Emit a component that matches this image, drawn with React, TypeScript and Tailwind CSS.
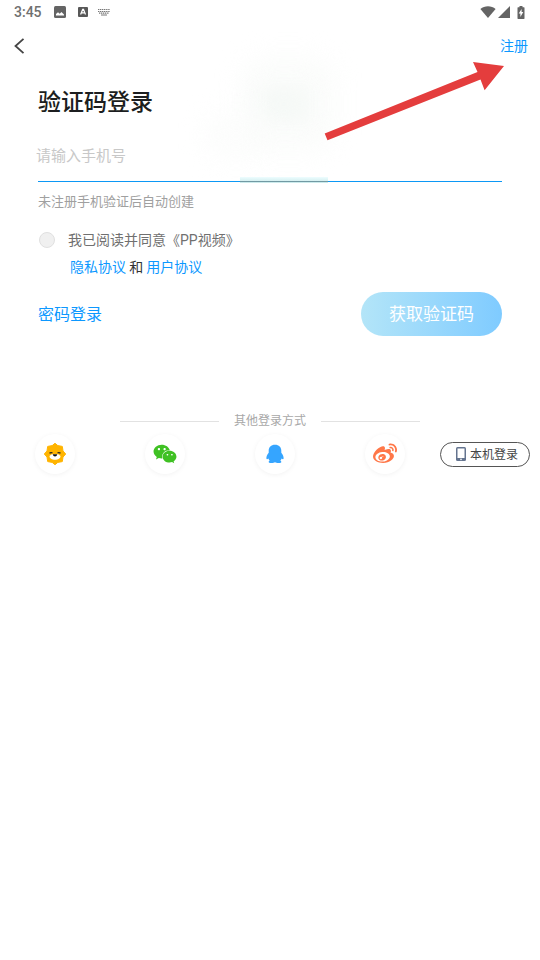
import React from "react";
import { FaWeibo, FaWeixin } from "react-icons/fa";

const fontStack = "font-['Noto_Sans_CJK_SC','Noto_Sans',sans-serif]";

function StatusBar() {
  return (
    <div className="flex h-6 items-center justify-between pl-3.5 pr-3.5 text-[#646464]">
      <div className="flex items-center">
        <span className="w-10 font-['Roboto',sans-serif] text-sm font-medium leading-6 text-[#707070]">3:45</span>
        <svg className="h-3 w-3" viewBox="0 0 12 12" aria-hidden="true">
          <rect width="12" height="12" rx="1.5" fill="#646464" />
          <path d="M2 9.5V8l2-1.7 1.7 1.5L7.5 6 10 8.5v1z" fill="#fff" />
        </svg>
        <svg className="ml-3 h-2.5 w-2.5" viewBox="0 0 10 10" aria-hidden="true">
          <rect width="10" height="10" rx="1" fill="#585858" />
          <path d="M2.6 7.5 4.7 2.4h.8l2 5.1M3.5 5.8h3" fill="none" stroke="#fff" strokeWidth="1.2" />
        </svg>
        <svg className="ml-2.5 h-2 w-3" viewBox="0 0 12 8" aria-hidden="true">
          <path d="M0 1.5h12M0 3.5h12M1 5.2h10" stroke="#777" strokeWidth="1.2" strokeDasharray="1.3 .6" />
          <path d="M3 7h6" stroke="#777" />
        </svg>
      </div>
      <div className="flex items-center">
        <svg className="h-3 w-4" viewBox="0 0 16 12" aria-hidden="true">
          <path d="M8 12 .4 3C4.500-.8 11.500-.8 15.600 3z" fill="currentColor" />
        </svg>
        <svg className="ml-0.5 h-3 w-3" viewBox="0 0 12 12" aria-hidden="true">
          <path d="M12 0v12H0z" fill="currentColor" />
        </svg>
        <svg className="ml-1.5 h-[13px] w-2.5" viewBox="0 0 10 13" aria-hidden="true">
          <path d="M3.500 0h3v1.300H8q.5 0 .5.700v10.300q0 .7-.5.700H2q-.5 0-.5-.700V2q0-.7.5-.7h1.500z" fill="currentColor" />
          <path d="M5.600 3v3H7.300L4.400 11V7.500H2.700z" fill="#fff" />
        </svg>
      </div>
    </div>
  );
}

function LionIcon() {
  return (
    <svg className="h-6 w-6" viewBox="0 0 24 24" aria-hidden="true">
      <path
        d="M12 1.300 14.800 3.600 19.300 4.400 20 8.900 22.700 12 20 15.100 19.300 19.600 14.800 20.400 12 22.700 9.200 20.400 4.700 19.600 4 15.100 1.300 12 4 8.900 4.700 4.400 9.200 3.600z"
        fill="#ffb400"
        stroke="#ffb400"
        strokeLinejoin="round"
      />
      <path d="M6.500 14q1.500-2 4-2h3q2.500 0 4 2c0 2.500-2.500 3.700-5.500 3.700s-5.500-1.200-5.500-3.700z" fill="#fff" />
      <path d="M6.500 11.300q1.500-1.300 3-.3M14.500 11q1.500-1 3 .3" stroke="#222" strokeWidth="1.300" fill="none" />
      <path d="M9.700 12.300h4.600l-.8 1.600-1.500.7-1.500-.7z" fill="#111" />
    </svg>
  );
}

function PenguinIcon() {
  return (
    <svg className="h-5 w-5" viewBox="0 0 20 20" aria-hidden="true">
      <path
        d="M10 .8c4 0 6.300 2.500 6.300 6.200v1.700c1.700 2 2.500 4.100 2.300 5.700-.1 1-.9 1.100-2 .1-.3.900-.7 1.600-1.300 2.200.9.400 1.200.9 1 1.500-.5 1.100-4.900 1.100-6.300.100-1.400 1-5.800 1-6.300-.100-.2-.6.1-1.100 1-1.500-.6-.6-1-1.300-1.300-2.200-1.100 1-1.900.9-2-.100-.2-1.600.6-3.700 2.300-5.700V7C3.700 3.300 6 .8 10 .8z"
        fill="#35a5ff"
      />
    </svg>
  );
}

function Provider({ label, children }: { label: string; children: React.ReactNode }) {
  return (
    <button
      type="button"
      aria-label={label}
      className="flex h-10 w-10 items-center justify-center rounded-full bg-white shadow-[0_1px_5px_rgba(0,0,0,0.05)]"
    >
      {children}
    </button>
  );
}

function Arrow() {
  return (
    <svg className="pointer-events-none absolute right-9 top-[62px] h-[79px] w-[180px]" viewBox="324 62 180 79" aria-hidden="true">
      <path d="M324.700 133.500 477.500 72 473 62l31 4-19.400 24.300L480.500 79.500 327.500 140.200z" fill="#e43d3d" />
    </svg>
  );
}

function Haze() {
  return (
    <div className="pointer-events-none absolute left-1/2 top-12 -ml-[70px] h-32 w-40" aria-hidden="true">
      <div className="absolute left-10 top-2 h-24 w-24 rounded-3xl bg-[#f9fbf9] opacity-60 blur-md" />
      <div className="absolute left-14 top-10 h-8 w-14 rounded-2xl bg-[#f0f6f2] opacity-60 blur-md" />
      <div className="absolute left-1 top-16 h-12 w-16 rounded-2xl bg-[#fbfcfb] opacity-60 blur-md" />
    </div>
  );
}

export default function App() {
  return (
    <div className={`relative min-h-screen bg-white ${fontStack}`}>
      <StatusBar />
      <Haze />
      <header className="flex h-11 items-center justify-between px-3">
        <button type="button" aria-label="返回">
          <svg className="h-4 w-4" viewBox="0 0 16 16" fill="none" stroke="#444" strokeWidth="1.800" aria-hidden="true">
            <path d="M11.500.8 3.500 8l8 7.200" />
          </svg>
        </button>
        <a href="#register" className="pb-0.5 text-sm leading-5 text-[#0c98ff]">注册</a>
      </header>

      <main>
        <form className="px-[38px] pt-4">
          <h1 className="text-[23px] font-medium leading-8 text-[#1c1e20]">验证码登录</h1>
          <div className="relative mt-6 border-b border-[#0c98f5] pb-3">
            <input
              type="tel"
              aria-label="手机号"
              placeholder="请输入手机号"
              className="-ml-0.5 block h-[29px] w-full bg-transparent text-[15px] text-[#333] outline-none placeholder:text-[#c8c8c8]"
            />
            <div className="absolute -bottom-0.5 left-1/2 -ml-[30px] h-1.5 w-[88px] bg-linear-to-b from-[#eefdff] to-[#c9e9ea]" aria-hidden="true">
              <div className="mt-1 h-px bg-[#7199a3]" />
            </div>
          </div>
          <p className="mt-[9px] text-[13px] leading-5 text-[#a0a0a0]">未注册手机验证后自动创建</p>

          <div className="mt-[19px] flex items-start">
            <input
              id="agree"
              type="checkbox"
              className="mt-0.5 ml-px h-4 w-4 appearance-none rounded-full border border-[#e0e0e0] bg-[#f0f0f0] checked:bg-[#0c98ff]"
            />
            <div className="ml-[13px] text-sm leading-5">
              <label htmlFor="agree" className="block font-['Roboto','Noto_Sans_CJK_SC',sans-serif] text-[#707070]">我已阅读并同意《PP视频》</label>
              <p className="mt-1.5 pl-0.5 text-[#333]">
                <a href="#privacy" className="text-[#0c98ff]">隐私协议</a> 和 <a href="#terms" className="text-[#0c98ff]">用户协议</a>
              </p>
            </div>
          </div>

          <div className="mt-4 flex items-center justify-between">
            <a href="#password" className="pb-0.5 text-base leading-6 text-[#0c98ff]">密码登录</a>
            <button
              type="button"
              className="h-11 rounded-full bg-linear-to-r from-[#b3e5f8] to-[#7fcbff] px-7 pb-0.5 text-[17px] leading-6 text-white"
            >
              获取验证码
            </button>
          </div>
        </form>

        <section className="mt-[74px]">
          <div className="flex items-center px-[120px]">
            <div className="h-px flex-1 bg-[#e2e2e2]" />
            <h2 className="px-[15px] pb-0.5 text-xs leading-5 text-[#a8a8a8]">其他登录方式</h2>
            <div className="h-px flex-1 bg-[#e2e2e2]" />
          </div>
          <div className="mt-0.5 flex items-center gap-[35px] pl-[35px] pr-2.5">
            <div className="flex flex-1 justify-between">
              <Provider label="苏宁登录">
                <LionIcon />
              </Provider>
              <Provider label="微信登录">
                <FaWeixin className="h-6 w-6 text-[#3fc123]" />
              </Provider>
              <Provider label="QQ登录">
                <PenguinIcon />
              </Provider>
              <Provider label="微博登录">
                <FaWeibo className="h-6 w-6 text-[#ff7748]" />
              </Provider>
            </div>
            <button
              type="button"
              className="flex h-[25px] w-[90px] items-center justify-center gap-1 rounded-full border border-[#555] pl-1 text-xs text-[#444]"
            >
              <svg className="h-3.5 w-2.5" viewBox="0 0 10 14" aria-hidden="true">
                <rect width="10" height="14" rx="1.500" fill="#64748f" />
                <path d="M1.500 1.500h7V11h-7z" fill="#fff" />
                <circle cx="5" cy="12.400" r=".8" fill="#fff" />
              </svg>
              本机登录
            </button>
          </div>
        </section>
      </main>
      <Arrow />
    </div>
  );
}
